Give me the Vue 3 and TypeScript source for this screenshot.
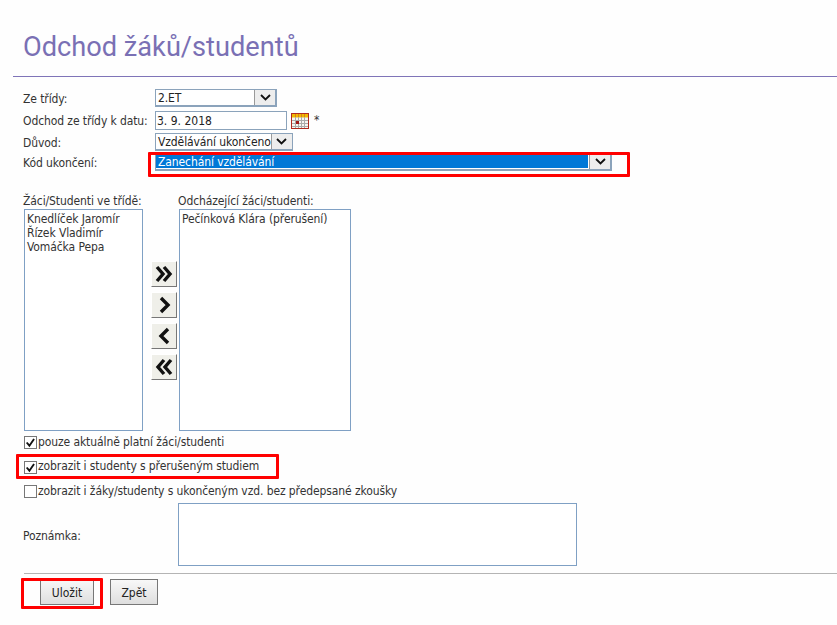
<script setup lang="ts">
const studentsIn: string[] = ['Knedlíček Jaromír', 'Řízek Vladimír', 'Vomáčka Pepa']
const studentsOut: string[] = ['Pečínková Klára (přerušení)']

const moveButtons = [
  { id: 'all-right', d: 'M5 5l6 7-6 7M12 5l6 7-6 7' },
  { id: 'right', d: 'M9 5l7 7-7 7' },
  { id: 'left', d: 'M16 5l-7 7 7 7' },
  { id: 'all-left', d: 'M12 5l-6 7 6 7M19 5l-6 7 6 7' }
]
</script>

<template>
  <div class="page">
    <h1 class="title">Odchod žáků/studentů</h1>
    <form class="form" @submit.prevent>
      <div class="fields">
        <div class="row">
          <span class="label">Ze třídy:</span>
          <div class="select select--class">
            <span class="select__value">2.ET</span>
            <span class="select__arrow"><svg width="11" height="7" viewBox="0 0 11 7"><path d="M1 1l4.5 4.5L10 1" fill="none" stroke="#111" stroke-width="1.8" /></svg></span>
          </div>
        </div>
        <div class="row">
          <span class="label">Odchod ze třídy k datu:</span>
          <input class="date" type="text" value="3. 9. 2018" />
          <svg class="calendar" width="18" height="16" viewBox="0 0 18 16">
            <rect x="0.5" y="0.5" width="17" height="15" fill="#f7f5f2" stroke="#b02a20" />
            <rect x="1" y="1" width="16" height="3.5" fill="#f2b800" />
            <path d="M4.5 1v3M7.5 1v3M10.5 1v3M13.5 1v3" stroke="#d8801c" stroke-width="1" />
            <path d="M1 7.5h16M1 10.5h16M1 13.5h16M4.5 4v11M7.5 4v11M10.5 4v11M13.5 4v11" stroke="#aaa" stroke-width="1" />
            <rect x="5" y="8" width="3" height="3" fill="#a01818" />
          </svg>
          <span class="required">*</span>
        </div>
        <div class="row">
          <span class="label">Důvod:</span>
          <div class="select select--reason">
            <span class="select__value">Vzdělávání ukončeno</span>
            <span class="select__arrow"><svg width="11" height="7" viewBox="0 0 11 7"><path d="M1 1l4.5 4.5L10 1" fill="none" stroke="#111" stroke-width="1.8" /></svg></span>
          </div>
        </div>
        <div class="row row--code">
          <span class="label">Kód ukončení:</span>
          <div class="select select--code">
            <span class="select__value select__value--active">Zanechání vzdělávání</span>
            <span class="select__arrow"><svg width="11" height="7" viewBox="0 0 11 7"><path d="M1 1l4.5 4.5L10 1" fill="none" stroke="#111" stroke-width="1.8" /></svg></span>
          </div>
          <span class="mark mark--code"></span>
        </div>
      </div>

      <div class="lists">
        <div class="list-col list-col--in">
          <div class="list-title">Žáci/Studenti ve třídě:</div>
          <div class="listbox">
            <div v-for="name in studentsIn" :key="name">{{ name }}</div>
          </div>
        </div>
        <div class="move">
          <button v-for="btn in moveButtons" :key="btn.id" type="button" class="move__btn">
            <svg width="24" height="24" viewBox="0 0 24 24"><path :d="btn.d" fill="none" stroke="#111" stroke-width="3.4" /></svg>
          </button>
        </div>
        <div class="list-col list-col--out">
          <div class="list-title">Odcházející žáci/studenti:</div>
          <div class="listbox">
            <div v-for="name in studentsOut" :key="name">{{ name }}</div>
          </div>
        </div>
      </div>

      <div class="checks">
        <label class="check">
          <span class="check__box"><svg width="11" height="11" viewBox="0 0 13 13"><path d="M2 6.5l3.2 3.8 5.5-8" fill="none" stroke="#111" stroke-width="2.2" /></svg></span>
          pouze aktuálně platní žáci/studenti
        </label>
        <label class="check">
          <span class="check__box"><svg width="11" height="11" viewBox="0 0 13 13"><path d="M2 6.5l3.2 3.8 5.5-8" fill="none" stroke="#111" stroke-width="2.2" /></svg></span>
          zobrazit i studenty s přerušeným studiem
          <span class="mark mark--check"></span>
        </label>
        <label class="check">
          <span class="check__box"></span>
          zobrazit i žáky/studenty s ukončeným vzd. bez předepsané zkoušky
        </label>
      </div>

      <div class="note">
        <span class="note__label">Poznámka:</span>
        <textarea class="note__input"></textarea>
      </div>

      <div class="actions">
        <div class="actions__save">
          <button type="submit" class="btn btn--save">Uložit</button>
          <span class="mark mark--save"></span>
        </div>
        <button type="button" class="btn">Zpět</button>
      </div>
    </form>
  </div>
</template>

<style>
html,
body {
  margin: 0;
  background: #fefefe;
}
</style>

<style scoped>
.page {
  width: 837px;
  height: 625px;
  overflow: hidden;
  font-family: 'DejaVu Sans Condensed', 'DejaVu Sans', sans-serif;
  font-size: 12px;
  letter-spacing: -0.1px;
  color: #333;
}

.title {
  margin: 0 0 0 13px;
  padding: 27px 0 9px 10px;
  height: 40px;
  border-bottom: 1px solid #7f74b8;
  font-family: Roboto, sans-serif;
  font-size: 27.2px;
  line-height: 40px;
  font-weight: 400;
  letter-spacing: 0;
  color: #7a70b4;
}

.form {
  padding-left: 23px;
}

.fields {
  padding-top: 10px;
}

.row {
  position: relative;
  display: flex;
  align-items: center;
  height: 22px;
}

.row--code {
  height: 18px;
}

.label {
  width: 132px;
  flex-shrink: 0;
  padding-top: 2px;
}

.select {
  display: flex;
  height: 18px;
  box-sizing: border-box;
  border-style: solid;
  border-color: #8ba3bb;
  border-width: 1px 2px 2px 1px;
  background: #fff;
  color: #222;
}

.select--class {
  width: 122px;
}

.select--reason {
  width: 138px;
}

.select--code {
  width: 457px;
}

.select__value {
  flex: 1;
  padding-left: 2px;
  line-height: 17px;
  white-space: nowrap;
}

.select__value--active {
  margin: 1px 1px 1px 0;
  background: #0078d7;
  color: #fff;
  line-height: 14px;
}

.select__arrow {
  width: 20px;
  flex-shrink: 0;
  display: flex;
  align-items: center;
  justify-content: center;
  background: #ededed;
  border-left: 1px solid #9a9a9a;
}

.date {
  width: 132px;
  height: 19px;
  box-sizing: border-box;
  padding: 2px 1px 0;
  border: 1px solid #8ba3bb;
  background: #fff;
  font: inherit;
  color: #222;
}

.calendar {
  margin: 2px 0 0 4px;
}

.required {
  margin-left: 5px;
}

.mark {
  position: absolute;
  box-sizing: border-box;
  border: 3px solid #f00;
  border-radius: 1px;
  pointer-events: none;
}

.mark--code {
  left: 125px;
  top: -1px;
  width: 482px;
  height: 25px;
}

.lists {
  display: flex;
  margin-top: 22px;
}

.list-col--in {
  width: 119px;
  margin-left: 1px;
}

.list-col--out {
  width: 172px;
}

.list-title {
  height: 16px;
  margin-left: -1px;
  line-height: 16px;
  white-space: nowrap;
}

.listbox {
  height: 222px;
  box-sizing: border-box;
  padding: 2px 2px 1px;
  border: 1px solid #7fa0c4;
  background: #fff;
  line-height: 14px;
  white-space: nowrap;
}

.move {
  width: 36px;
  box-sizing: border-box;
  padding: 68px 0 0 8px;
  display: flex;
  flex-direction: column;
  gap: 5px;
}

.move__btn {
  width: 26px;
  height: 26px;
  padding: 0;
  display: flex;
  align-items: center;
  justify-content: center;
  border: 1px solid;
  border-color: #fff #777 #777 #fff;
  background: #efefe9;
}

.checks {
  display: flex;
  flex-direction: column;
  gap: 9.5px;
  margin-top: 3px;
  margin-left: 1px;
}

.check {
  position: relative;
  display: flex;
  align-items: center;
  height: 15px;
  white-space: nowrap;
}

.check__box {
  width: 11px;
  height: 11px;
  flex-shrink: 0;
  border: 1px solid #777;
  background: #fff;
  display: block;
  position: relative;
  top: 1px;
  margin-right: 1px;
}

.check__box svg {
  display: block;
}

.mark--check {
  left: -8px;
  top: -5px;
  width: 263px;
  height: 25px;
}

.note {
  display: flex;
  align-items: center;
  margin-top: 5px;
}

.note__label {
  width: 155px;
  padding-top: 2px;
}

.note__input {
  width: 399px;
  height: 63px;
  box-sizing: border-box;
  margin: 0;
  border: 1px solid #7fa0c4;
  background: #fff;
  resize: none;
  display: block;
}

.actions {
  display: flex;
  gap: 16px;
  margin: 7px 0 0 1px;
  padding: 5px 0 0 16px;
  border-top: 1px solid #b4b4b4;
}

.actions__save {
  position: relative;
}

.btn {
  width: 48px;
  height: 26px;
  padding: 2px 0 0;
  border: 1px solid #777;
  background: linear-gradient(#f8f8f8, #dedede);
  font: inherit;
  color: #222;
  display: block;
}

.btn--save {
  width: 54px;
}

.mark--save {
  left: -19px;
  top: -1px;
  width: 82px;
  height: 31px;
}
</style>
